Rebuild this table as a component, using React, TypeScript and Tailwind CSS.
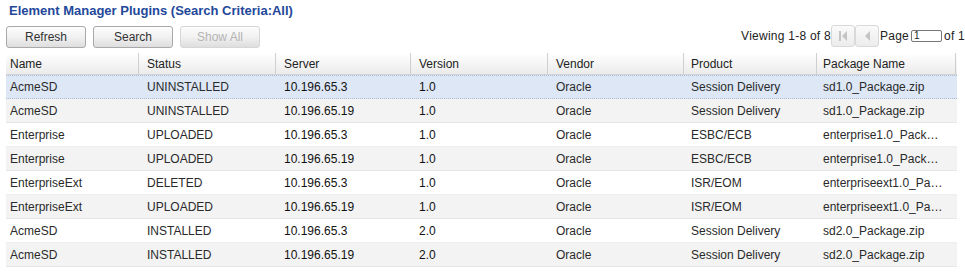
const columns = [
  { label: 'Name', width: 'w-[133px]', pad: 'pl-[4px]' },
  { label: 'Status', width: 'w-[137px]', pad: 'pl-[8px]' },
  { label: 'Server', width: 'w-[135px]', pad: 'pl-[8px]' },
  { label: 'Version', width: 'w-[137px]', pad: 'pl-[8px]' },
  { label: 'Vendor', width: 'w-[136px]', pad: 'pl-[8px]' },
  { label: 'Product', width: 'w-[133px]', pad: 'pl-[7px]' },
  { label: 'Package Name', width: 'w-[139px]', pad: 'pl-[6px]' },
];

const rows = [
  ['AcmeSD', 'UNINSTALLED', '10.196.65.3', '1.0', 'Oracle', 'Session Delivery', 'sd1.0_Package.zip'],
  ['AcmeSD', 'UNINSTALLED', '10.196.65.19', '1.0', 'Oracle', 'Session Delivery', 'sd1.0_Package.zip'],
  ['Enterprise', 'UPLOADED', '10.196.65.3', '1.0', 'Oracle', 'ESBC/ECB', 'enterprise1.0_Package.zip'],
  ['Enterprise', 'UPLOADED', '10.196.65.19', '1.0', 'Oracle', 'ESBC/ECB', 'enterprise1.0_Package.zip'],
  ['EnterpriseExt', 'DELETED', '10.196.65.3', '1.0', 'Oracle', 'ISR/EOM', 'enterpriseext1.0_Package.zip'],
  ['EnterpriseExt', 'UPLOADED', '10.196.65.19', '1.0', 'Oracle', 'ISR/EOM', 'enterpriseext1.0_Package.zip'],
  ['AcmeSD', 'INSTALLED', '10.196.65.3', '2.0', 'Oracle', 'Session Delivery', 'sd2.0_Package.zip'],
  ['AcmeSD', 'INSTALLED', '10.196.65.19', '2.0', 'Oracle', 'Session Delivery', 'sd2.0_Package.zip'],
];

function ToolButton({ label, disabled }: { label: string; disabled?: boolean }) {
  return (
    <button
      className={`w-[80px] h-[22px] rounded-[3px] border text-[12px] leading-none bg-gradient-to-b from-[#fdfdfd] via-[#f1f1f1] to-[#dedede] ${
        disabled ? 'border-[#d6d6d6] text-[#b4b4b4]' : 'border-[#a9a9a9] text-[#333]'
      }`}
    >
      {label}
    </button>
  );
}

function PagerButton({ first }: { first?: boolean }) {
  return (
    <div className="w-[24px] h-[22px] rounded-[3px] border border-[#d9d9d9] bg-gradient-to-b from-[#fafafa] to-[#ececec] flex items-center justify-center">
      <svg width="10" height="12" viewBox="0 0 10 12">
        {first && <rect x="1" y="1" width="2" height="10" fill="#c4c4c4" />}
        <path d={first ? 'M9 1 L4 6 L9 11 Z' : 'M8 1 L3 6 L8 11 Z'} fill="#c4c4c4" />
      </svg>
    </div>
  );
}

export default function App() {
  return (
    <div className="w-[965px] h-[277px] bg-white overflow-hidden font-['Liberation_Sans',Arial,sans-serif] text-[12px] text-[#2a2a2a]">
      <div className="h-[20px] pl-[9px] pt-[1px] font-bold text-[13px] text-[#23489a]">
        Element Manager Plugins (Search Criteria:All)
      </div>

      <div className="flex items-center h-[33px] pl-[6px] pb-[1px]">
        <div className="flex gap-[7px] pt-[2px]">
          <ToolButton label="Refresh" />
          <ToolButton label="Search" />
          <ToolButton label="Show All" disabled />
        </div>
        <div className="ml-auto flex items-center text-[#222] whitespace-nowrap">
          <span className="tracking-[0.25px]">Viewing 1-8 of 8</span>
          <PagerButton first />
          <PagerButton />
          <span className="ml-[1px] tracking-[0.25px]">Page</span>
          <div className="ml-[2px] w-[31px] h-[12px] border border-[#777] rounded-[2px] text-[10px] leading-[10px] pl-[2px]">1</div>
          <span className="ml-[2px] tracking-[0.25px]">of 1</span>
        </div>
      </div>

      <div className="ml-[6px] w-[951px]">
        <div className="flex h-[22px] bg-gradient-to-b from-[#ffffff] to-[#ebebeb] border-b border-[#d4d4d4]">
          {columns.map((c) => (
            <div
              key={c.label}
              className={`${c.width} ${c.pad} flex items-center border-r border-[#cfcfcf] text-[#222]`}
            >
              {c.label}
            </div>
          ))}
        </div>
        {rows.map((r, i) => (
          <div
            key={i}
            className={`flex h-[24px] items-center ${
              i === 0
                ? 'bg-[#dde7f6] border-y border-dotted border-[#aab8d0]'
                : i % 2 === 1
                ? 'bg-[#f3f3f3] border-b border-[#e6e6e6]'
                : 'bg-white border-b border-[#eeeeee]'
            }`}
          >
            {r.map((cell, j) => (
              <div
                key={j}
                className={`${columns[j].width} ${columns[j].pad} pr-[12px] truncate ${
                  j === 2 || j === 3 ? 'text-[#111]' : ''
                }`}
              >
                {cell}
              </div>
            ))}
          </div>
        ))}
      </div>
    </div>
  );
}
